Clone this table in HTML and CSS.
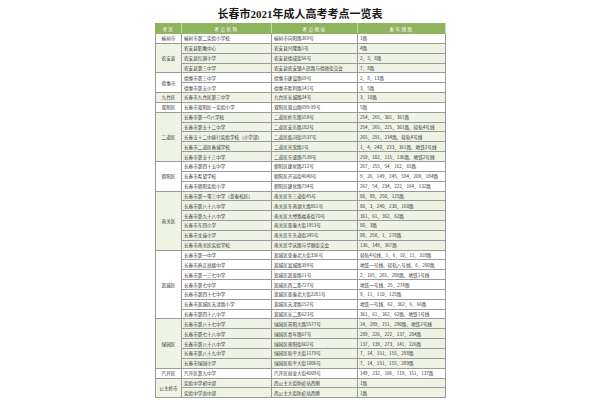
FILE: index.html
```html
<!DOCTYPE html>
<html lang="zh-CN">
<head>
<meta charset="utf-8">
<title>长春市2021年成人高考考点一览表</title>
<link rel="stylesheet" href="styles.css">
</head>
<body>
<div class="page">
  <h1 class="title">长春市2021年成人高考考点一览表</h1>
  <table class="exam">
    <colgroup>
      <col class="c-area"><col class="c-name"><col class="c-addr"><col class="c-bus">
    </colgroup>
    <thead>
      <tr><th>考区</th><th>考点名称</th><th>考点地址</th><th>乘车线路</th></tr>
    </thead>
    <tbody class="g-white">
      <tr><td class="area">榆树市</td><td>榆树市第二实验小学校</td><td>榆树市向阳路369号</td><td>1路</td></tr>
    </tbody>
    <tbody class="g-tint">
      <tr><td class="area" rowspan="3">农安县</td><td>农安县职教中心</td><td>农安县兴隆路1号</td><td>4路</td></tr>
      <tr><td>农安县红旗小学</td><td>农安县德成街56号</td><td>2、3、8路</td></tr>
      <tr><td>农安县第三中学</td><td>农安县农安镇人民路与德政街交会</td><td>7、8路</td></tr>
    </tbody>
    <tbody class="g-white">
      <tr><td class="area" rowspan="2">德惠市</td><td>德惠市第三中学</td><td>德惠市建设路69号</td><td>2、8、13路</td></tr>
      <tr><td>德惠市第五小学</td><td>德惠市胜利路141号</td><td>3、5路</td></tr>
    </tbody>
    <tbody class="g-tint">
      <tr><td class="area">九台区</td><td>长春市九台区第三中学</td><td>九台区长城路24号</td><td>3、10路</td></tr>
    </tbody>
    <tbody class="g-white">
      <tr><td class="area">双阳区</td><td>长春市双阳区一实验小学</td><td>双阳区双山路699-99号</td><td>5路</td></tr>
    </tbody>
    <tbody class="g-tint">
      <tr><td class="area" rowspan="5">二道区</td><td>长春市第一O八学校</td><td>二道区岭东路559号</td><td>254、265、301、361路</td></tr>
      <tr><td>长春市第五十二中学</td><td>二道区安乐路182号</td><td>254、265、225、361路、轻轨4号线</td></tr>
      <tr><td>长春五十二中赫行实验学校（小学部）</td><td>二道区临河街1537号</td><td>265、291、234路、轻轨4号线</td></tr>
      <tr><td>长春市二道区春城学校</td><td>二道区光荣路1号</td><td>1、4、240、233、361路、地铁2号线</td></tr>
      <tr><td>长春市第五十三中学</td><td>二道区东盛路7539号</td><td>259、102、115、136路、地铁2号线</td></tr>
    </tbody>
    <tbody class="g-white">
      <tr><td class="area" rowspan="3">朝阳区</td><td>长春市第四十五中学</td><td>朝阳区建化路212号</td><td>267、255、54、162、65路</td></tr>
      <tr><td>长春市希望学校</td><td>朝阳区开运街4040号</td><td>9、26、149、245、594、200、184路</td></tr>
      <tr><td>长春市朝阳实验小学</td><td>朝阳区建化路734号</td><td>267、54、234、222、164、132路</td></tr>
    </tbody>
    <tbody class="g-tint">
      <tr><td class="area" rowspan="6">南关区</td><td>长春市第一零三中学（亚泰校区）</td><td>南关区东三道街45号</td><td>80、88、250、125路</td></tr>
      <tr><td>长春市第八十八中学</td><td>南关区东南湖大路861号</td><td>80、3、240、238、160路</td></tr>
      <tr><td>长春市第九十八中学</td><td>南关区大经路福寿街70号</td><td>361、61、362、62路</td></tr>
      <tr><td>长春市东四小学</td><td>南关区亚泰大街1953号</td><td>80、3路</td></tr>
      <tr><td>长春市文庙小学</td><td>南关区东头道街245号</td><td>80、250、1、278路</td></tr>
      <tr><td>长春市南关区实验学校</td><td>南关区华庆路与华顺街交会</td><td>136、149、367路</td></tr>
    </tbody>
    <tbody class="g-white">
      <tr><td class="area" rowspan="7">宽城区</td><td>长春市第一中学</td><td>宽城区亚泰北大街336号</td><td>轻轨4号线、1、6、10、11、318路</td></tr>
      <tr><td>长春市养正高级中学</td><td>宽城区富城路399号</td><td>地铁一号线、轻轨八号线、6、280路</td></tr>
      <tr><td>长春市第一三七中学</td><td>宽城区凯旋路11号</td><td>2、165、265、288路、地铁1号线</td></tr>
      <tr><td>长春市第七中学</td><td>宽城区西二条727号</td><td>地铁一号线、25、274路</td></tr>
      <tr><td>长春市第四十七中学</td><td>宽城区亚泰北大街2281号</td><td>9、11、110、125路</td></tr>
      <tr><td>长春市宽城区天津路小学</td><td>宽城区天津路152号</td><td>地铁一号线、62、362、6、66路</td></tr>
      <tr><td>长春市第四十八中学</td><td>宽城区长二条623号</td><td>361、61、362、62路、地铁1号线</td></tr>
    </tbody>
    <tbody class="g-tint">
      <tr><td class="area" rowspan="5">绿园区</td><td>长春市第八十七中学</td><td>绿园区景阳大路5577号</td><td>14、289、151、290路、地铁2号线</td></tr>
      <tr><td>长春市第七十八中学</td><td>绿园区青年路67号</td><td>289、226、222、137、284路</td></tr>
      <tr><td>长春市第八十八中学</td><td>绿园区普阳街602号</td><td>137、139、273、141、226路</td></tr>
      <tr><td>长春市第八十九中学</td><td>绿园区和平大街1179号</td><td>7、14、151、155、288路</td></tr>
      <tr><td>长春市绿园小学</td><td>绿园区和平大街1006号</td><td>7、14、151、155、289路</td></tr>
    </tbody>
    <tbody class="g-white">
      <tr><td class="area">汽开区</td><td>汽开区第九中学</td><td>汽开区创业大街4009号</td><td>149、232、106、119、151、137路</td></tr>
    </tbody>
    <tbody class="g-tint">
      <tr><td class="area" rowspan="2">公主岭市</td><td>实验中学初中部</td><td>西公主大街防疫站西侧</td><td>1路</td></tr>
      <tr><td>实验中学高中部</td><td>西公主大街防疫站西侧</td><td>1路</td></tr>
    </tbody>
  </table>
</div>
</body>
</html>
```
FILE: styles.css
```css
html, body {
  margin: 0;
  padding: 0;
  background: #ffffff;
}

.page {
  width: 290px;
  margin: 0 auto;
  padding-top: 6px;
}

.title {
  margin: 0;
  height: 17px;
  line-height: 17px;
  text-align: center;
  font-family: "Liberation Serif", "Noto Sans CJK SC", serif;
  font-weight: 700;
  font-size: 11px;
  color: #1a1a1a;
  letter-spacing: 0;
}

.exam {
  width: 290px;
  border-collapse: collapse;
  table-layout: fixed;
  font-family: "Noto Sans CJK SC", "Liberation Serif", serif;
  font-size: 4.6px;
  color: #333333;
}

.c-area { width: 26px; }
.c-name { width: 90px; }
.c-addr { width: 86px; }
.c-bus  { width: 88px; }

.exam th {
  height: 9px;
  padding: 0;
  background: #8fb45e;
  color: #ffffff;
  font-weight: 400;
  letter-spacing: 1.5px;
  text-align: center;
  border: 1px solid #8fb45e;
  border-right-color: #c9dab0;
  line-height: 8px;
}

.exam td {
  height: 8.85px;
  padding: 0 0 0 2px;
  border: 1px solid #9a9a9a;
  line-height: 8px;
  white-space: nowrap;
  overflow: hidden;
  vertical-align: middle;
}

.exam td.area {
  text-align: center;
  padding: 0;
}

.g-tint td {
  background: #eef3e3;
}

.g-white td {
  background: #ffffff;
}
```
